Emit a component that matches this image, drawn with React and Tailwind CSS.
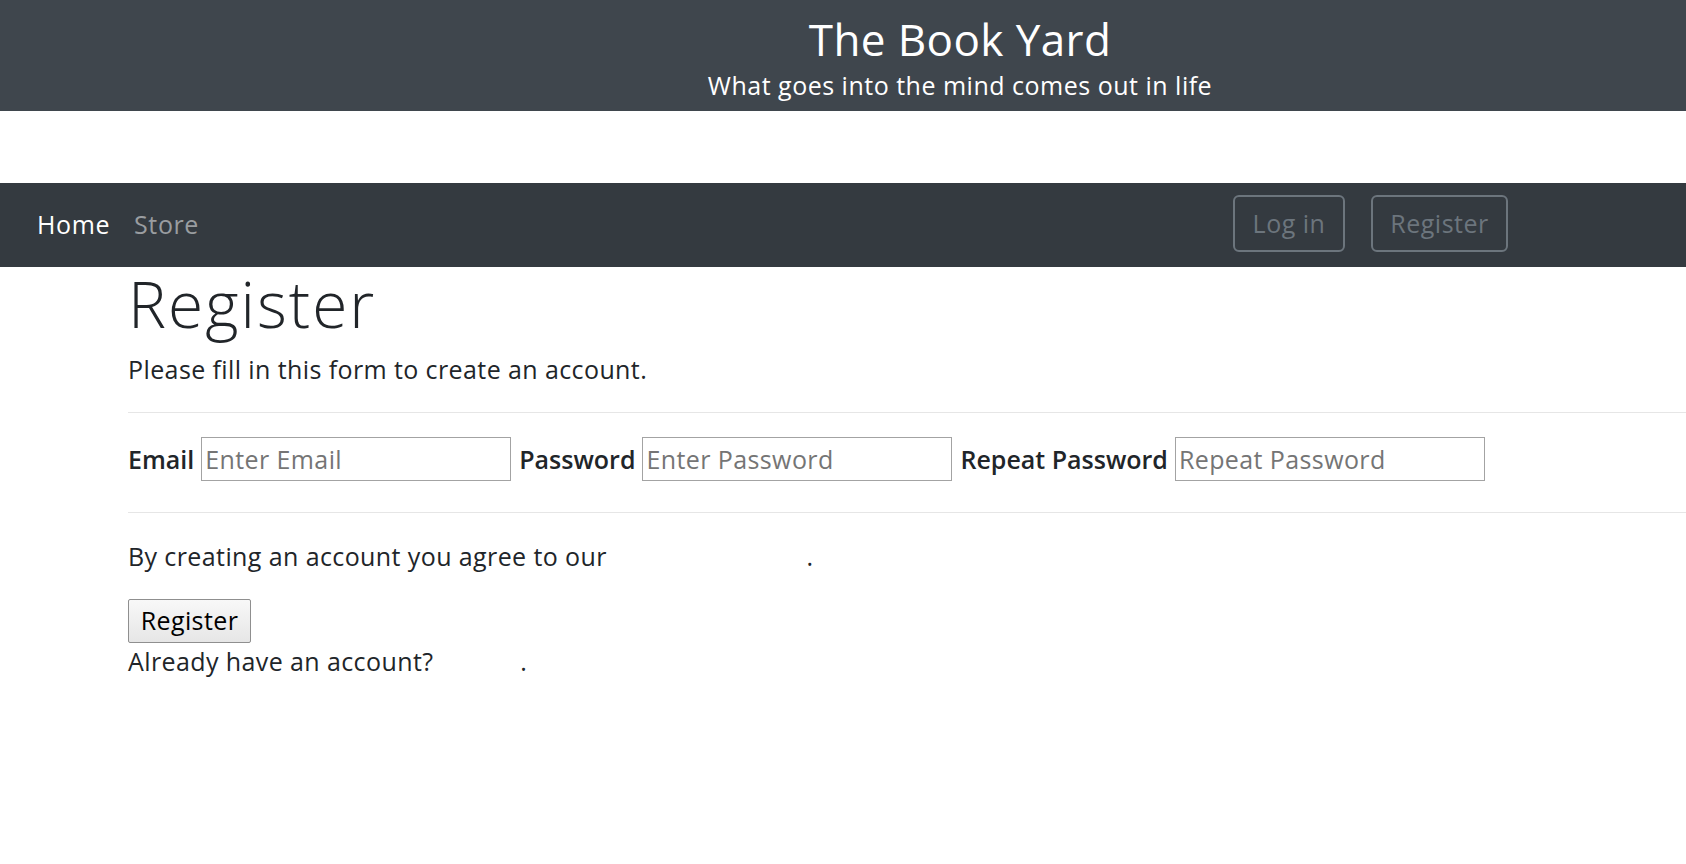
import React from "react";

function Field({ label, placeholder, type = "text" }) {
  return (
    <div className="flex items-center gap-[7px]">
      <label className="text-[25px] font-semibold text-[#212529] leading-[36px] tracking-[0px]">{label}</label>
      <input
        type={type}
        placeholder={placeholder}
        className="w-[310px] h-[44px] border border-[#a3a3a3] px-[3px] text-[25px] tracking-[0.4px] text-[#212529] placeholder:text-[#757575] outline-none bg-white"
      />
    </div>
  );
}

export default function App() {
  return (
    <div className="min-h-[864px] bg-white font-['Open_Sans',sans-serif] text-[#212529]">
      <header className="h-[111px] bg-[#3f464d] flex flex-col items-center pt-[13px] pl-[234px]">
        <h1 className="text-[44px] leading-[52px] font-medium text-white tracking-[0.4px]">The Book Yard</h1>
        <p className="text-[25px] leading-[36px] text-white mt-[2px] tracking-[0.5px]">What goes into the mind comes out in life</p>
      </header>

      <div className="h-[72px]" />

      <nav className="h-[84px] bg-[#343a40] flex items-center pl-[37px] pr-[178px]">
        <div className="flex items-center gap-[24px] text-[25px] tracking-[0.6px]">
          <a className="text-white">Home</a>
          <a className="text-[#9a9da0]">Store</a>
        </div>
        <div className="ml-auto flex items-center gap-[26px] -mt-[3px]">
          <button className="h-[57px] w-[112px] border-2 border-[#6c757d] rounded-[6px] text-[25px] tracking-[0.5px] text-[#6c757d]">Log in</button>
          <button className="h-[57px] w-[137px] border-2 border-[#6c757d] rounded-[6px] text-[25px] tracking-[0.5px] text-[#6c757d]">Register</button>
        </div>
      </nav>

      <main className="pl-[128px] tracking-[0.4px]">
        <h1 className="text-[64px] leading-[73px] font-light text-[#212529] tracking-[2px]">Register</h1>
        <p className="mt-[11px] text-[25px] leading-[36px]">Please fill in this form to create an account.</p>
        <hr className="mt-[25px] border-0 border-t border-[#e6e6e6]" />

        <div className="mt-[24px] flex items-center gap-[8px]">
          <Field label="Email" placeholder="Enter Email" />
          <Field label="Password" placeholder="Enter Password" type="password" />
          <Field label="Repeat Password" placeholder="Repeat Password" type="password" />
        </div>

        <hr className="mt-[31px] border-0 border-t border-[#e6e6e6]" />

        <p className="mt-[25px] text-[25px] leading-[36px]">
          By creating an account you agree to our <a className="text-white">Terms &amp; Privacy</a>.
        </p>

        <button className="mt-[25px] h-[44px] w-[123px] border border-[#8f8f8f] rounded-[2px] bg-gradient-to-b from-[#f8f8f8] to-[#e6e6e6] text-[25px] text-black">
          Register
        </button>

        <p className="text-[25px] leading-[36px]">
          Already have an account? <a className="text-white">Sign in</a>.
        </p>
      </main>
    </div>
  );
}
